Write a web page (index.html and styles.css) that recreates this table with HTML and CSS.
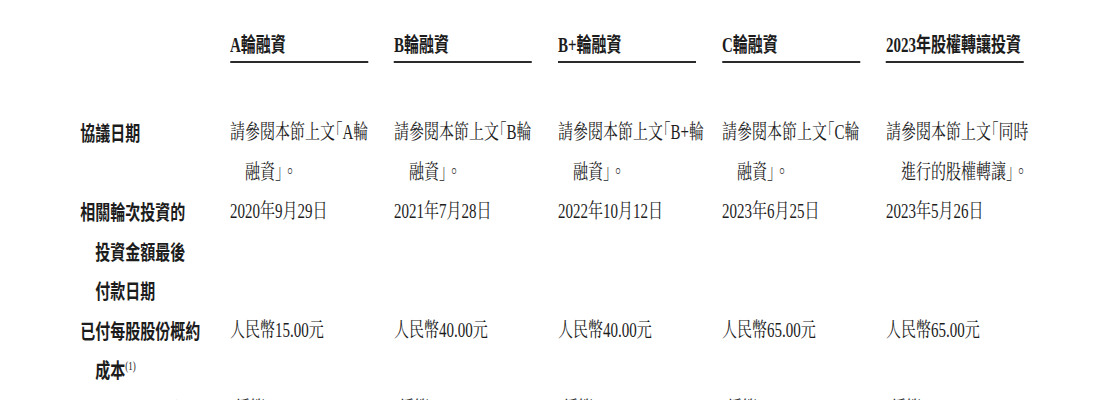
FILE: index.html
```html
<!DOCTYPE html>
<html lang="zh-Hant">
<head>
<meta charset="utf-8">
<title>融資</title>
<link rel="stylesheet" href="styles.css">
</head>
<body>
<div class="sheet">
  <div class="grid">
    <div class="head head-blank"></div>
    <div class="head">A輪融資</div>
    <div class="head">B輪融資</div>
    <div class="head">B+輪融資</div>
    <div class="head">C輪融資</div>
    <div class="head">2023年股權轉讓投資</div>

    <div class="label">協議日期</div>
    <div class="cell">請參閱本節上文<span class="q">「</span>A輪<br>融資」。</div>
    <div class="cell">請參閱本節上文<span class="q">「</span>B輪<br>融資」。</div>
    <div class="cell">請參閱本節上文<span class="q">「</span>B+輪<br>融資」。</div>
    <div class="cell">請參閱本節上文<span class="q">「</span>C輪<br>融資」。</div>
    <div class="cell">請參閱本節上文<span class="q">「</span>同時<br>進行的股權轉讓」。</div>

    <div class="label">相關輪次投資的<br>投資金額最後<br>付款日期</div>
    <div class="cell">2020年9月29日</div>
    <div class="cell">2021年7月28日</div>
    <div class="cell">2022年10月12日</div>
    <div class="cell">2023年6月25日</div>
    <div class="cell">2023年5月26日</div>

    <div class="label">已付每股股份概約<br>成本<sup class="note">(1)</sup></div>
    <div class="cell">人民幣15.00元</div>
    <div class="cell">人民幣40.00元</div>
    <div class="cell">人民幣40.00元</div>
    <div class="cell">人民幣65.00元</div>
    <div class="cell">人民幣65.00元</div>

    <div class="label">較[編纂]的折讓<sup class="note">(2)</sup></div>
    <div class="cell">[編纂]%</div>
    <div class="cell">[編纂]%</div>
    <div class="cell">[編纂]%</div>
    <div class="cell">[編纂]%</div>
    <div class="cell">[編纂]%</div>
  </div>
</div>
</body>
</html>
```

FILE: styles.css
```css
html, body {
  margin: 0;
  padding: 0;
  background: #ffffff;
  overflow: hidden;
}

.sheet {
  width: 1365px;
  transform: scaleX(0.75);
  transform-origin: 0 0;
  color: #1c1c1c;
  font-family: "Liberation Serif", "Noto Serif CJK TC", "Noto Sans CJK TC", serif;
  font-size: 20px;
}

.grid {
  display: grid;
  grid-template-columns: 165px repeat(5, 184px);
  column-gap: 34.67px;
  padding-left: 107px;
}

.head {
  font-weight: 700;
  font-family: "Liberation Serif", "Noto Sans CJK TC", serif;
  line-height: 24px;
  padding-top: 33px;
  padding-bottom: 4px;
  border-bottom: 2px solid #2b2b2b;
  margin-bottom: 50px;
  white-space: nowrap;
}

.head-blank {
  border-bottom: none;
}

.label {
  font-family: "Noto Sans CJK TC", sans-serif;
  font-weight: 700;
  line-height: 39.5px;
  white-space: nowrap;
  padding-left: 1em;
  text-indent: -1em;
}

.cell {
  line-height: 39.5px;
  white-space: nowrap;
  padding-left: 1em;
  text-indent: -1em;
}

.q {
  font-feature-settings: "halt" 1;
}

.note {
  font-family: "Liberation Serif", serif;
  font-weight: 400;
  font-size: 12px;
  line-height: 0;
  vertical-align: 8px;
}
```
